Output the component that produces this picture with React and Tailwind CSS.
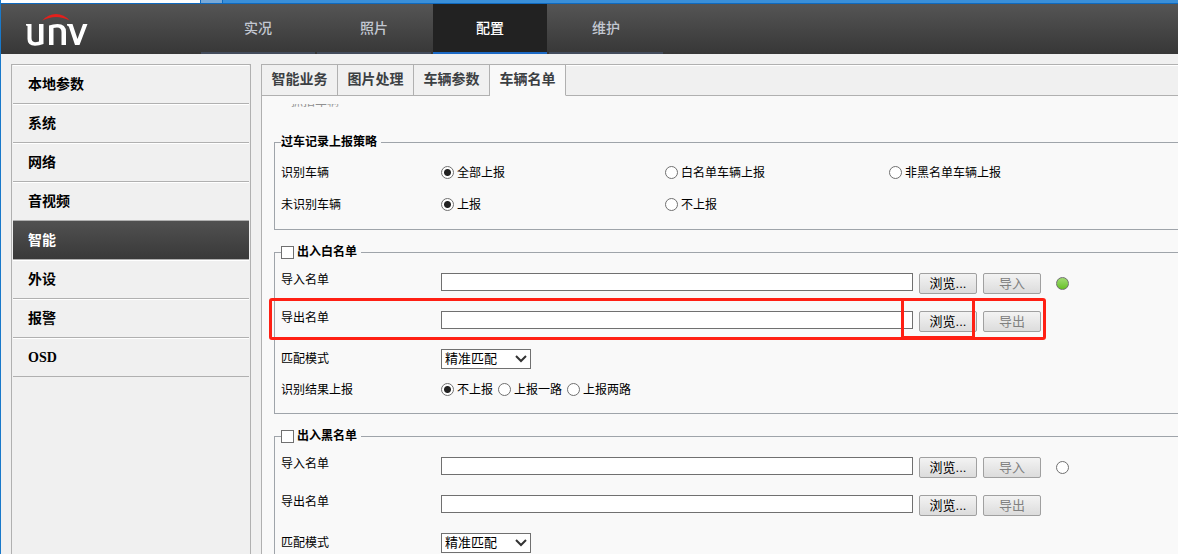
import { useState } from "react";

const NAV = ["实况", "照片", "配置", "维护"];
const MENU = ["本地参数", "系统", "网络", "音视频", "智能", "外设", "报警", "OSD"];
const TABS = ["智能业务", "图片处理", "车辆参数", "车辆名单"];

function Logo() {
  return (
    <svg viewBox="0 0 62 34" className="h-[34px] w-[62px]" role="img" aria-label="UNV">
      <path d="M16.500 7.500Q22 1 30 1Q38 1 43.500 7.500Q37 4 30 4Q23 4 16.500 7.500Z" fill="#e4201c" />
      <path
        d="M0 11H5.500V25Q5.500 29 9 29.200Q11 29.200 13 28.500V11H17.500V31Q13 32.800 9 32.800Q1.500 32.500 1.500 26V13L0 12.500Z"
        fill="#fff"
      />
      <path
        d="M23 32V12.500Q27 11 31.500 11Q40 11 40 19V32H35.500V19Q35.500 14.500 31 14.500Q29 14.500 27.500 15V32Z"
        fill="#fff"
      />
      <path d="M41 11H46.500L51.500 26L57 11H61.500L53.500 32H49L43 14Q42.500 12.500 41 12.500Z" fill="#fff" />
    </svg>
  );
}

function Header({ active, onSelect }) {
  return (
    <header className="flex h-[50px] shrink-0 bg-linear-to-b from-[#555555] to-[#373737]">
      <div className="flex w-[200px] shrink-0 items-start pt-[9px] pl-[25px]">
        <Logo />
      </div>
      <nav className="flex gap-[2px]">
        {NAV.map((item) => (
          <button
            key={item}
            type="button"
            onClick={() => onSelect(item)}
            className={
              "w-[114px] border-b-2 pb-px text-sm font-medium " +
              (item === active
                ? "border-[#1c69c4] bg-[#222222] font-bold text-white"
                : "border-[#434c5c] text-[#c3c8d2]")
            }
          >
            {item}
          </button>
        ))}
      </nav>
    </header>
  );
}

function Sidebar({ active, onSelect }) {
  return (
    <aside className="w-60 shrink-0 border border-b-0 border-[#b0b0b0] px-px">
      {MENU.map((item) => (
        <button
          key={item}
          type="button"
          onClick={() => onSelect(item)}
          className={
            "flex h-[39px] w-full items-center border-t border-b border-b-[#b0b0b0] pl-[15px] font-['Liberation_Serif','Noto_Sans_CJK_SC',serif] text-sm font-bold " +
            (item === active
              ? "border-t-[#505050] bg-linear-to-b from-[#505050] to-[#393939] text-white"
              : "border-t-white text-black")
          }
        >
          {item}
        </button>
      ))}
    </aside>
  );
}

function Tabs({ active, onSelect }) {
  return (
    <div className="flex h-8 border-t border-[#b0b0b0]" role="tablist">
      {TABS.map((item) => (
        <button
          key={item}
          type="button"
          role="tab"
          aria-selected={item === active}
          onClick={() => onSelect(item)}
          className={
            "w-[76px] border-r border-b border-r-[#b0b0b0] pb-0.5 text-sm font-bold text-[#3c4043] " +
            (item === active ? "border-b-[#f9f9f9] bg-[#f9f9f9]" : "border-b-[#b0b0b0]")
          }
        >
          {item}
        </button>
      ))}
      <div className="flex-1 border-t border-b border-t-white border-b-[#b0b0b0]" />
    </div>
  );
}

function Radio({ name, label, defaultChecked, className = "" }) {
  return (
    <label className={"flex items-center gap-[3px] whitespace-nowrap " + className}>
      <input
        type="radio"
        name={name}
        defaultChecked={defaultChecked}
        className="size-[13px] shrink-0 appearance-none rounded-full border border-[#707070] bg-white checked:bg-[radial-gradient(circle,#222_3px,#fff_4px)]"
      />
      <span className="pt-0.5 leading-4">{label}</span>
    </label>
  );
}

function Row({ label, className = "", children }) {
  return (
    <div className={"flex items-center " + className}>
      <span className="w-40 shrink-0 pt-0.5 leading-3">{label}</span>
      {children}
    </div>
  );
}

function Button({ children, disabled }) {
  return (
    <button
      type="button"
      disabled={disabled}
      className="h-[21px] w-[58px] shrink-0 rounded-[2px] border border-[#a0a0a0] bg-linear-to-b from-[#f3f3f3] to-[#dcdcdc] text-[13px] leading-[19px] text-black disabled:text-[#808080]"
    >
      {children}
    </button>
  );
}

function FileRow({ id, label, action, status, highlighted }) {
  return (
    <div className="relative flex h-[38px] items-start">
      <label htmlFor={id} className="w-40 shrink-0 pt-px leading-3">
        {label}
      </label>
      <input
        id={id}
        type="text"
        className="mr-1.5 h-[18px] w-[472px] border border-[#707070] bg-white px-1"
      />
      <div className="flex gap-1.5">
        <Button>浏览...</Button>
        <Button disabled>{action}</Button>
      </div>
      {status && (
        <span
          className={
            "mt-1 ml-[15px] size-[13px] rounded-full border border-[#707070] " +
            (status === "ok" ? "bg-linear-to-b from-[#a0dc70] to-[#66c01e]" : "bg-white")
          }
        />
      )}
      {highlighted && (
        <>
          <div className="pointer-events-none absolute -top-[13px] -left-3 h-[42px] w-[777px] rounded-[3px] border-3 border-[#ff2014]" />
          <div className="pointer-events-none absolute -top-[13px] left-[620px] h-[41px] w-[74px] rounded-[2px] border-3 border-[#ff2014]" />
        </>
      )}
    </div>
  );
}

function ListFieldset({ id, title, status, highlighted }) {
  return (
    <fieldset className="mt-3.5 border border-r-0 border-[#9fa4aa] pb-4 pl-1.5">
      <legend className="h-4 pr-1">
        <label className="flex h-4 items-center gap-[3px] font-bold">
          <input
            type="checkbox"
            className="size-[13px] appearance-none border border-[#707070] bg-white checked:bg-[#333]"
          />
          {title}
        </label>
      </legend>
      <div className="pt-[13px]">
        <FileRow id={id + "-import"} label="导入名单" action="导入" status={status} />
        <FileRow id={id + "-export"} label="导出名单" action="导出" highlighted={highlighted} />
        <div className="flex h-5 items-center">
          <label htmlFor={id + "-mode"} className="w-40 shrink-0 leading-3">
            匹配模式
          </label>
          <div className="relative h-5 w-[90px]">
            <select
              id={id + "-mode"}
              className="block h-5 w-full appearance-none border border-[#707070] bg-white pl-[3px] text-[13px] leading-[18px]"
            >
              <option>精准匹配</option>
              <option>模糊匹配</option>
            </select>
            <svg
              viewBox="0 0 12 8"
              className="pointer-events-none absolute top-1.5 right-1 h-2 w-3"
              fill="none"
              stroke="#333"
              strokeWidth="2"
              aria-hidden="true"
            >
              <path d="M1 1L6 6L11 1" />
            </svg>
          </div>
        </div>
        <Row label="识别结果上报" className="mt-3 h-4">
          <div className="flex gap-[5px]">
            <Radio name={id + "-report"} label="不上报" defaultChecked />
            <Radio name={id + "-report"} label="上报一路" />
            <Radio name={id + "-report"} label="上报两路" />
          </div>
        </Row>
      </div>
    </fieldset>
  );
}

export default function App() {
  const [nav, setNav] = useState("配置");
  const [menu, setMenu] = useState("智能");
  const [tab, setTab] = useState("车辆名单");

  return (
    <div className="flex h-screen flex-col overflow-hidden border-l border-[#1979ca] bg-[#f0f0f0] font-['Liberation_Sans','Noto_Sans_CJK_SC',sans-serif] text-xs text-black">
      <div className="flex h-1 shrink-0 border-b border-[#0f6abf] bg-[#3a8fd9]">
        <div className="w-[200px] border-r border-[#0f6abf] bg-white" />
        <div className="w-[22px] border-r border-[#0f6abf] bg-[#78a9d8]" />
      </div>
      <Header active={nav} onSelect={setNav} />
      <div className="flex min-h-0 flex-1 gap-2.5 pt-2.5 pl-2.5">
        <Sidebar active={menu} onSelect={setMenu} />
        <main className="min-w-0 flex-1 border-l border-[#b0b0b0]">
          <Tabs active={tab} onSelect={setTab} />
          <div className="h-full overflow-hidden bg-[#f9f9f9] pt-2 pl-3">
            <div className="flex h-1 items-end overflow-hidden pl-[17px] leading-3 text-[#909090]">
              抓拍车辆
            </div>
            <fieldset className="mt-[26px] border border-r-0 border-[#9fa4aa] pb-[9px] pl-1.5">
              <legend className="h-4 pr-1 leading-4 font-bold">过车记录上报策略</legend>
              <div className="pt-1.5">
                <Row label="识别车辆" className="h-8">
                  <Radio name="known" label="全部上报" defaultChecked className="w-56" />
                  <Radio name="known" label="白名单车辆上报" className="w-56" />
                  <Radio name="known" label="非黑名单车辆上报" />
                </Row>
                <Row label="未识别车辆" className="h-8">
                  <Radio name="unknown" label="上报" defaultChecked className="w-56" />
                  <Radio name="unknown" label="不上报" />
                </Row>
              </div>
            </fieldset>
            <ListFieldset id="white" title="出入白名单" status="ok" highlighted />
            <ListFieldset id="black" title="出入黑名单" status="idle" />
          </div>
        </main>
      </div>
    </div>
  );
}
